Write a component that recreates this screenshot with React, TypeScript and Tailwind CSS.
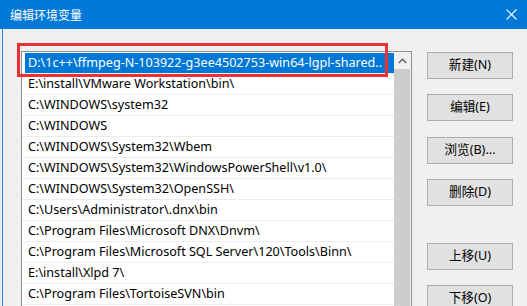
const paths = [
  'D:\\1c++\\ffmpeg-N-103922-g3ee4502753-win64-lgpl-shared..',
  'E:\\install\\VMware Workstation\\bin\\',
  'C:\\WINDOWS\\system32',
  'C:\\WINDOWS',
  'C:\\WINDOWS\\System32\\Wbem',
  'C:\\WINDOWS\\System32\\WindowsPowerShell\\v1.0\\',
  'C:\\WINDOWS\\System32\\OpenSSH\\',
  'C:\\Users\\Administrator\\.dnx\\bin',
  'C:\\Program Files\\Microsoft DNX\\Dnvm\\',
  'C:\\Program Files\\Microsoft SQL Server\\120\\Tools\\Binn\\',
  'E:\\install\\Xlpd 7\\',
  'C:\\Program Files\\TortoiseSVN\\bin',
]

const buttons = [
  { label: '新建(N)', mt: 'mt-0' },
  { label: '编辑(E)', mt: 'mt-[15px]' },
  { label: '浏览(B)...', mt: 'mt-[16px]' },
  { label: '删除(D)', mt: 'mt-[15px]' },
  { label: '上移(U)', mt: 'mt-[37px]' },
  { label: '下移(O)', mt: 'mt-[15px]' },
]

function CloseIcon() {
  return (
    <svg width="11" height="11" viewBox="0 0 11 11" className="block">
      <path d="M0.5 0.5 L10.5 10.5 M10.5 0.5 L0.5 10.5" stroke="#fff" strokeWidth="1.1" />
    </svg>
  )
}

function PathRow({ text, selected }: { text: string; selected: boolean }) {
  return (
    <div className="h-[21px] border-b border-[#ececec] flex">
      <div
        className={
          selected
            ? 'ml-[3px] flex-1 bg-[#0078d7] text-white flex items-center pl-[3px] whitespace-nowrap overflow-hidden'
            : 'ml-[3px] flex-1 text-black flex items-center pl-[3px] whitespace-nowrap overflow-hidden'
        }
      >
        {text}
      </div>
    </div>
  )
}

export default function App() {
  return (
    <div
      className="w-[527px] h-[306px] overflow-hidden flex flex-col bg-[#f0f0f0] text-[12.6px] select-none"
      style={{ fontFamily: '"Noto Sans", "Noto Sans CJK SC", sans-serif' }}
    >
      {/* title bar */}
      <div className="h-[29px] shrink-0 bg-[#0078d7] flex items-center pl-[10px] pr-[10px] text-white">
        <span className="flex-1 leading-none text-[12px]" style={{ fontFamily: '"Noto Sans CJK SC", sans-serif' }}>编辑环境变量</span>
        <CloseIcon />
      </div>

      <div className="flex flex-1 min-h-0">
        <div className="w-[2px] bg-[#e9eef5]" />
        <div className="w-[1px] bg-[#3a80d2]" />

        <div className="flex flex-1 min-h-0 pl-[18px] relative">
          {/* list box */}
          <div className="mt-[22px] w-[391px] border border-[#8f8f8f] bg-white flex min-h-0 h-[400px] shrink-0">
            <div className="flex-1 pt-[1px] overflow-hidden">
              {paths.map((p, i) => (
                <PathRow key={i} text={p} selected={i === 0} />
              ))}
            </div>
            <div className="w-[17px] flex flex-col bg-[#f0f0f0]">
              <div className="h-[17px] flex items-center justify-center">
                <svg width="9" height="6" viewBox="0 0 9 6">
                  <path d="M0.8 5 L4.5 1.3 L8.2 5" stroke="#606060" strokeWidth="1.4" fill="none" />
                </svg>
              </div>
              <div className="flex-1 bg-[#cdcdcd] mr-[1px]" />
            </div>
          </div>

          {/* red highlight frame */}
          <div className="absolute left-[14px] top-[14px] w-[371px] h-[34px] border-[3px] border-[#eb2f33] pointer-events-none" />

          {/* buttons */}
          <div className="ml-[15px] mt-[23px] flex flex-col">
            {buttons.map((b) => (
              <div
                key={b.label}
                className={`${b.mt} w-[86px] h-[27px] shrink-0 bg-[#e1e1e1] border border-[#adadad] flex items-center justify-center text-black`}
              >
                {b.label}
              </div>
            ))}
          </div>
        </div>
      </div>
    </div>
  )
}
